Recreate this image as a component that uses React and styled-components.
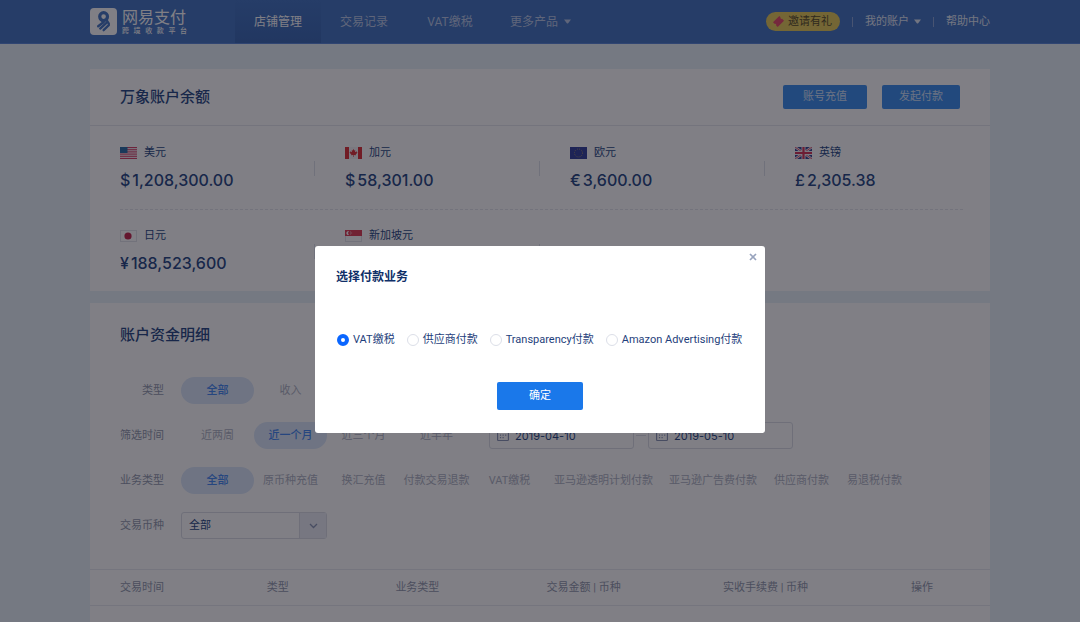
import React from 'react';
import styled, { createGlobalStyle } from 'styled-components';

const GlobalStyle = createGlobalStyle`
  *, *::before, *::after {
    box-sizing: border-box;
  }

  body {
    margin: 0;
    background: #e8f2f8;
    color: #2f4f88;
    font-family: Roboto, 'Noto Sans CJK SC', sans-serif;
    font-size: 11px;
    line-height: 16px;
  }

  button, input, select {
    font: inherit;
    color: inherit;
  }

  button {
    padding: 0;
    border: 0;
    background: none;
    cursor: pointer;
  }

  a {
    color: inherit;
    text-decoration: none;
  }
`;

const Page = styled.div`
  min-height: 100vh;
  display: flex;
  flex-direction: column;
`;

const Header = styled.header`
  background: #4a7ac4;
  border-bottom: 1px solid #5f8bd8;
`;

const HeaderInner = styled.div`
  max-width: 900px;
  height: 43px;
  margin: 0 auto;
  display: flex;
  align-items: center;
`;

const Logo = styled.a`
  width: 145px;
  display: flex;
  align-items: center;
  gap: 5px;
  color: #fff;
`;

const LogoName = styled.div`
  font-size: 16px;
  line-height: 19px;
`;

const LogoSub = styled.div`
  width: 65px;
  font-size: 7px;
  line-height: 8px;
  font-weight: 500;
  text-align-last: justify;
`;

const Nav = styled.nav`
  flex: 1;
  align-self: stretch;
  display: flex;
`;

const NavLink = styled.a`
  min-width: 86px;
  padding: 0 17px;
  display: flex;
  align-items: center;
  justify-content: center;
  gap: 6px;
  font-size: 12px;
  white-space: nowrap;
  color: ${(props) => (props.$active ? '#fff' : '#bccbe8')};
  background: ${(props) =>
    props.$active ? 'linear-gradient(#4a7ac4, #416eb6)' : 'transparent'};
`;

const UserLinks = styled.div`
  display: flex;
  align-items: center;
  gap: 12px;
`;

const UserLink = styled.a`
  display: flex;
  align-items: center;
  gap: 5px;
  color: #e3eaf6;
`;

const Separator = styled.span`
  width: 1px;
  height: 10px;
  background: #8ea8d8;
`;

const Invite = styled.a`
  height: 19px;
  padding: 0 8px 0 6px;
  display: flex;
  align-items: center;
  gap: 3px;
  border-radius: 10px;
  background: #e6cd5f;
  color: #5c5230;
`;

const Main = styled.main`
  width: 100%;
  max-width: 900px;
  margin: 0 auto;
  padding-top: 25px;
  flex: 1;
  display: flex;
  flex-direction: column;
  gap: 12px;
`;

const Card = styled.section`
  background: #fff;
  ${(props) => props.$grow && 'flex: 1;'}
`;

const CardHead = styled.div`
  height: 57px;
  padding: 0 30px;
  display: flex;
  align-items: center;
  gap: 15px;
  border-bottom: 1px solid #e6e8ee;
`;

const CardTitle = styled.h2`
  flex: 1;
  margin: 0;
  font-size: 15px;
  line-height: 24px;
  font-weight: 500;
`;

const HeadButton = styled.button`
  height: 24px;
  padding: 0 ${(props) => (props.$wide ? 20 : 17)}px;
  border-radius: 2px;
  background: #4392ee;
  color: #d5e5fb;
`;

const BalanceRow = styled.div`
  display: grid;
  grid-template-columns: repeat(4, 1fr);
  padding: ${(props) => (props.$last ? '17px 0 16px' : '18px 0 17px')};
`;

const Balance = styled.div`
  padding-left: 30px;
  display: grid;
  grid-template-columns: 1fr 1px;
  align-items: center;
`;

const BalanceRule = styled.span`
  height: 15px;
  background: #dfe2ea;
`;

const Currency = styled.div`
  height: 18px;
  display: flex;
  align-items: center;
  gap: 7px;
`;

const Amount = styled.div`
  height: 24px;
  margin-top: 6px;
  display: flex;
  gap: 2px;
  font-family: Inter, sans-serif;
  font-size: 16px;
  line-height: 24px;
  font-weight: 500;
`;

const DashedRule = styled.hr`
  margin: 0 27px 0 30px;
  border: 0;
  border-top: 1px dashed #e4e6ed;
`;

const DetailHead = styled.div`
  padding: 20px 30px 30px;
`;

const Filters = styled.div`
  padding: 0 29px 30px 30px;
  display: flex;
  flex-direction: column;
  gap: 18px;
`;

const FilterRow = styled.div`
  height: 27px;
  display: flex;
  align-items: center;
`;

const FilterLabel = styled.label`
  width: 44px;
  margin-right: 17px;
  display: flex;
  justify-content: flex-end;
  white-space: nowrap;
  color: #969db0;
`;

const FilterOption = styled.button`
  min-width: 73px;
  height: 27px;
  padding: 0 ${(props) => (props.$long ? 8 : 3)}px;
  border-radius: 14px;
  white-space: nowrap;
  font-weight: ${(props) => (props.$active ? 500 : 400)};
  color: ${(props) => (props.$active ? '#4a8cf2' : '#b1b6c5')};
  background: ${(props) => (props.$active ? '#dce8fa' : 'transparent')};
`;

const DateRange = styled.div`
  margin-left: 16px;
  display: flex;
  align-items: center;
  gap: 2px;
`;

const DateBox = styled.label`
  width: 145px;
  height: 27px;
  padding: 0 7px;
  display: flex;
  align-items: center;
  gap: 6px;
  border: 1px solid #dcdfe6;
  border-radius: 3px;
`;

const DateInput = styled.input`
  width: 100%;
  padding: 0;
  border: 0;
  background: none;
  outline: none;
  font-family: Inter, sans-serif;
`;

const RangeDash = styled.span`
  width: 10px;
  height: 1px;
  background: #dcdfe6;
`;

const SelectBox = styled.div`
  position: relative;
  width: 146px;
  height: 27px;
`;

const Select = styled.select`
  width: 100%;
  height: 100%;
  padding: 0 30px 0 7px;
  appearance: none;
  border: 1px solid #dcdfe6;
  border-radius: 3px;
  background: transparent;
`;

const SelectArrow = styled.span`
  position: absolute;
  top: 1px;
  right: 1px;
  bottom: 1px;
  width: 27px;
  display: flex;
  align-items: center;
  justify-content: center;
  border-left: 1px solid #dcdfe6;
  background: #eceff7;
  pointer-events: none;
`;

const Table = styled.table`
  width: 100%;
  table-layout: fixed;
  border-collapse: collapse;
`;

const Th = styled.th`
  width: ${(props) => props.$width};
  height: 36px;
  padding: 0 0 0 30px;
  border-top: 1px solid #e9ebf0;
  border-bottom: 1px solid #e9ebf0;
  text-align: left;
  font-weight: 400;
  white-space: nowrap;
  color: #969db0;
`;

const Overlay = styled.div`
  position: fixed;
  inset: 0;
  padding-top: 246px;
  display: flex;
  align-items: flex-start;
  justify-content: center;
  background: rgba(2, 0, 12, 0.5);
`;

const Modal = styled.div`
  position: relative;
  width: 450px;
  padding: 21px 21px 23px;
  border-radius: 3px;
  background: #fff;
`;

const CloseButton = styled.button`
  position: absolute;
  top: 4px;
  right: 5px;
  width: 14px;
  height: 14px;
  display: flex;
  align-items: center;
  justify-content: center;
`;

const ModalTitle = styled.h3`
  margin: 0;
  font-size: 12px;
  line-height: 20px;
  font-weight: 700;
  color: #0f2f68;
`;

const RadioGroup = styled.div`
  margin: 45px 0 34px;
  display: flex;
  gap: 12px;
  padding-left: 1px;
`;

const RadioLabel = styled.label`
  display: flex;
  align-items: center;
  gap: 4px;
  white-space: nowrap;
  color: #1f3f7c;
`;

const Radio = styled.input`
  width: 12px;
  height: 12px;
  margin: 0;
  appearance: none;
  border: 1px solid #dcdfe8;
  border-radius: 50%;
  background: #fff;

  &:checked {
    border: 4px solid #0a66ff;
  }
`;

const ConfirmButton = styled.button`
  display: block;
  width: 86px;
  height: 28px;
  margin: 0 auto;
  border-radius: 2px;
  background: #1a78ea;
  color: #fff;
`;

const Caret = () => (
  <svg width="7" height="5" viewBox="0 0 7 5" fill="currentColor">
    <path d="M0 0.4h7L4.2 4.2q-.7.8-1.4 0z" />
  </svg>
);

const LogoMark = () => (
  <svg width="27" height="27" viewBox="0 0 27 27" fill="none">
    <rect width="27" height="27" rx="4" fill="#fff" />
    <g stroke="#4a7ac4" strokeLinecap="round" strokeLinejoin="round">
      <circle cx="13.6" cy="8.6" r="3.9" strokeWidth="3.2" />
      <path d="M10.6 11.4l3.2 2.6L8.2 18.2" strokeWidth="2.4" />
      <path d="M17 14.4L10.2 20.6" strokeWidth="2.3" />
      <path d="M16.6 12l2.2 3.6v1.6l-5.2 5" strokeWidth="2.3" />
    </g>
  </svg>
);

const Ticket = () => (
  <svg width="13" height="13" viewBox="0 0 13 13">
    <path
      d="M7.3 1l1.2 1.2a1.2 1.2 0 0 0 1.6 1.6L12 5.7 5.7 12l-1.6-1.6a1.2 1.2 0 0 0-1.6-1.6L1 7.3z"
      fill="#e8506e"
    />
  </svg>
);

const Calendar = () => (
  <svg width="14" height="13" viewBox="0 0 14 13" fill="none" stroke="#8f9ab8">
    <rect x="0.7" y="1.7" width="12.6" height="10.6" rx="1" strokeWidth="1.4" />
    <path d="M3.5 0v3M10.5 0v3" />
    <path d="M3.4 6h7.4M3.4 9h4.6" strokeWidth="1.3" strokeDasharray="1.4 1.6" />
  </svg>
);

const UsFlag = () => (
  <svg width="17" height="12" viewBox="0 0 17 12">
    <rect width="17" height="12" fill="#f3e6ee" />
    <path
      d="M0 .5h17M0 2.7h17M0 4.9h17M0 7.1h17M0 9.3h17M0 11.5h17"
      stroke="#d8486c"
    />
    <rect width="7.5" height="6" fill="#3273a8" />
  </svg>
);

const CaFlag = () => (
  <svg width="17" height="12" viewBox="0 0 17 12">
    <rect width="17" height="12" fill="#f5f2f5" />
    <path d="M0 0h4v12H0zM13 0h4v12h-4z" fill="#e0393e" />
    <path
      d="M8.5 2l.9 1.6.9-.4-.3 2 1.7-.9.1 1 .8.3-1.9 1.9.2.7-2.1-.2V10h-.6V8l-2.1.2.2-.7-1.9-1.9.8-.3.1-1 1.7.9-.3-2 .9.4z"
      fill="#e0393e"
    />
  </svg>
);

const EuFlag = () => (
  <svg width="17" height="12" viewBox="0 0 17 12">
    <rect width="17" height="12" fill="#3a48a0" />
    <circle
      cx="8.5"
      cy="6"
      r="4"
      fill="none"
      stroke="#b9a668"
      strokeWidth="0.9"
      strokeDasharray="0.8 1.3"
    />
  </svg>
);

const GbFlag = () => (
  <svg width="17" height="12" viewBox="0 0 17 12">
    <rect width="17" height="12" fill="#3d4a96" />
    <path d="M0 0l17 12M17 0L0 12" stroke="#f5f0f5" strokeWidth="2.4" />
    <path d="M0 0l17 12M17 0L0 12" stroke="#d83a5c" strokeWidth="0.8" />
    <path d="M8.5 0v12M0 6h17" stroke="#f5f0f5" strokeWidth="4" />
    <path d="M8.5 0v12M0 6h17" stroke="#d83a5c" strokeWidth="2.2" />
  </svg>
);

const JpFlag = () => (
  <svg width="17" height="12" viewBox="0 0 17 12">
    <rect x="0.5" y="0.5" width="16" height="11" fill="#fff" stroke="#e2e4ea" />
    <circle cx="8" cy="6" r="3.6" fill="#c62c52" />
  </svg>
);

const SgFlag = () => (
  <svg width="17" height="12" viewBox="0 0 17 12">
    <rect x="0.5" y="0.5" width="16" height="11" fill="#fff" stroke="#e2e4ea" />
    <rect width="17" height="6" fill="#e0455a" />
    <path d="M4 1.2a2 2 0 1 0 0 3.8 2.4 2.4 0 0 1 0-3.8z" fill="#fff" />
    <path d="M5 2h.8M5 4h.8M6.3 3h.8" stroke="#fff" strokeWidth="0.7" />
  </svg>
);

const balances = [
  [
    { flag: UsFlag, name: '美元', symbol: '$', amount: '1,208,300.00' },
    { flag: CaFlag, name: '加元', symbol: '$', amount: '58,301.00' },
    { flag: EuFlag, name: '欧元', symbol: '€', amount: '3,600.00' },
    { flag: GbFlag, name: '英镑', symbol: '£', amount: '2,305.38' },
  ],
  [
    { flag: JpFlag, name: '日元', symbol: '¥', amount: '188,523,600' },
    { flag: SgFlag, name: '新加坡元', symbol: '', amount: '' },
  ],
];

const businessTypes = [
  '全部',
  '原币种充值',
  '换汇充值',
  '付款交易退款',
  'VAT缴税',
  '亚马逊透明计划付款',
  '亚马逊广告费付款',
  '供应商付款',
  '易退税付款',
];

const columns = [
  { title: '交易时间', width: '16.3%' },
  { title: '类型', width: '14.3%' },
  { title: '业务类型', width: '16.8%' },
  { title: '交易金额 | 币种', width: '19.6%' },
  { title: '实收手续费 | 币种', width: '20.9%' },
  { title: '操作', width: 'auto' },
];

const services = ['VAT缴税', '供应商付款', 'Transparency付款', 'Amazon Advertising付款'];

function BalanceList({ items, last }) {
  return (
    <BalanceRow $last={last}>
      {items.map(({ flag: Flag, name, symbol, amount }, i) => (
        <Balance key={name}>
          <div>
            <Currency>
              <Flag />
              {name}
            </Currency>
            <Amount>
              <span>{symbol}</span>
              <span>{amount}</span>
            </Amount>
          </div>
          {i < 3 && <BalanceRule />}
        </Balance>
      ))}
    </BalanceRow>
  );
}

function FilterOptions({ options, value, onChange }) {
  return options.map((option) => (
    <FilterOption
      key={option}
      type="button"
      $active={option === value}
      $long={option.length > 6}
      aria-pressed={option === value}
      onClick={() => onChange(option)}
    >
      {option}
    </FilterOption>
  ));
}

function PaymentModal({ onClose }) {
  const [service, setService] = React.useState('VAT缴税');

  return (
    <Overlay>
      <Modal role="dialog" aria-modal="true" aria-labelledby="modal-title">
        <CloseButton type="button" aria-label="关闭" onClick={onClose}>
          <svg width="8" height="8" viewBox="0 0 8 8" stroke="#98a3bd" strokeWidth="1.7">
            <path d="M1 1l6 6M7 1L1 7" />
          </svg>
        </CloseButton>
        <ModalTitle id="modal-title">选择付款业务</ModalTitle>
        <RadioGroup>
          {services.map((name) => (
            <RadioLabel key={name}>
              <Radio
                type="radio"
                name="service"
                checked={service === name}
                onChange={() => setService(name)}
              />
              {name}
            </RadioLabel>
          ))}
        </RadioGroup>
        <ConfirmButton type="button" onClick={onClose}>
          确定
        </ConfirmButton>
      </Modal>
    </Overlay>
  );
}

function App() {
  const [open, setOpen] = React.useState(true);
  const [type, setType] = React.useState('全部');
  const [period, setPeriod] = React.useState('近一个月');
  const [business, setBusiness] = React.useState('全部');
  const [from, setFrom] = React.useState('2019-04-10');
  const [to, setTo] = React.useState('2019-05-10');

  return (
    <>
      <GlobalStyle />
      <Page>
        <Header>
          <HeaderInner>
            <Logo href="#">
              <LogoMark />
              <div>
                <LogoName>网易支付</LogoName>
                <LogoSub>跨境收款平台</LogoSub>
              </div>
            </Logo>
            <Nav>
              <NavLink href="#" $active>
                店铺管理
              </NavLink>
              <NavLink href="#">交易记录</NavLink>
              <NavLink href="#">VAT缴税</NavLink>
              <NavLink href="#">
                更多产品
                <Caret />
              </NavLink>
            </Nav>
            <UserLinks>
              <Invite href="#">
                <Ticket />
                邀请有礼
              </Invite>
              <Separator />
              <UserLink href="#">
                我的账户
                <Caret />
              </UserLink>
              <Separator />
              <UserLink href="#">帮助中心</UserLink>
            </UserLinks>
          </HeaderInner>
        </Header>

        <Main>
          <Card>
            <CardHead>
              <CardTitle>万象账户余额</CardTitle>
              <HeadButton type="button" $wide>
                账号充值
              </HeadButton>
              <HeadButton type="button" onClick={() => setOpen(true)}>
                发起付款
              </HeadButton>
            </CardHead>
            <BalanceList items={balances[0]} />
            <DashedRule />
            <BalanceList items={balances[1]} last />
          </Card>

          <Card $grow>
            <DetailHead>
              <CardTitle>账户资金明细</CardTitle>
            </DetailHead>
            <Filters>
              <FilterRow>
                <FilterLabel as="span">类型</FilterLabel>
                <FilterOptions options={['全部', '收入']} value={type} onChange={setType} />
              </FilterRow>
              <FilterRow>
                <FilterLabel as="span">筛选时间</FilterLabel>
                <FilterOptions
                  options={['近两周', '近一个月', '近三个月', '近半年']}
                  value={period}
                  onChange={setPeriod}
                />
                <DateRange>
                  <DateBox>
                    <Calendar />
                    <DateInput
                      aria-label="开始日期"
                      value={from}
                      onChange={(event) => setFrom(event.target.value)}
                    />
                  </DateBox>
                  <RangeDash />
                  <DateBox>
                    <Calendar />
                    <DateInput
                      aria-label="结束日期"
                      value={to}
                      onChange={(event) => setTo(event.target.value)}
                    />
                  </DateBox>
                </DateRange>
              </FilterRow>
              <FilterRow>
                <FilterLabel as="span">业务类型</FilterLabel>
                <FilterOptions options={businessTypes} value={business} onChange={setBusiness} />
              </FilterRow>
              <FilterRow>
                <FilterLabel htmlFor="currency">交易币种</FilterLabel>
                <SelectBox>
                  <Select id="currency">
                    <option>全部</option>
                  </Select>
                  <SelectArrow>
                    <svg width="9" height="6" viewBox="0 0 9 6" fill="none" stroke="#8f9ab8">
                      <path d="M1 1l3.5 3.5L8 1" strokeWidth="1.3" />
                    </svg>
                  </SelectArrow>
                </SelectBox>
              </FilterRow>
            </Filters>
            <Table>
              <thead>
                <tr>
                  {columns.map((column) => (
                    <Th key={column.title} $width={column.width}>
                      {column.title}
                    </Th>
                  ))}
                </tr>
              </thead>
            </Table>
          </Card>
        </Main>
      </Page>
      {open && <PaymentModal onClose={() => setOpen(false)} />}
    </>
  );
}

export default App;
